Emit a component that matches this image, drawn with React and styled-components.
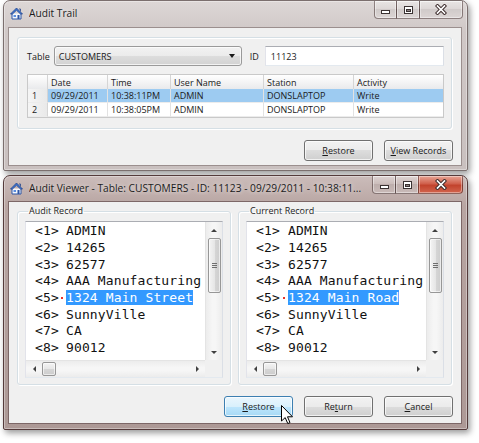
import React from "react";
import styled, { createGlobalStyle } from "styled-components";

const GlobalStyle = createGlobalStyle`
  html, body { margin: 0; padding: 0; background: #fff; }
  body {
    font-family: "Open Sans", "Noto Sans", sans-serif;
    font-size: 9px;
    color: #1a1a1a;
  }
  * { box-sizing: border-box; }
`;

const Page = styled.div`
  width: 479px;
  height: 443px;
  padding-left: 3px;
  display: flex;
  flex-direction: column;
  gap: 4px;
  overflow: hidden;
`;

const Window = styled.div`
  width: 465px;
  border: 1px solid ${(p) => (p.$active ? "#553b3b" : "#7b6f6e")};
  border-radius: 7px 7px 2px 2px;
  background: ${(p) =>
    p.$active
      ? "linear-gradient(#cbbcba, #b8a5a2 30px, #ad9996)"
      : "linear-gradient(#ddd7d6, #d0c8c7 30px, #c9c0bf)"};
  padding: 0 5px ${(p) => (p.$active ? 5 : 4)}px 4px;
  box-shadow: 2px 3px 6px rgba(0, 0, 0, 0.4),
    inset 0 0 0 1px rgba(255, 255, 255, 0.35);
`;

const TitleBar = styled.div`
  height: ${(p) => p.$h}px;
  display: flex;
  align-items: flex-start;
  padding-left: 2px;
`;

const AppIcon = styled.svg`
  flex: none;
  margin-top: ${(p) => p.$top}px;
`;

const Caption = styled.div`
  flex: 1;
  min-width: 0;
  margin: ${(p) => p.$top}px 6px 0 6px;
  font-size: 10.2px;
  line-height: 14px;
  color: #1c1c1c;
  white-space: nowrap;
  overflow: hidden;
  text-shadow: 0 0 5px rgba(255, 255, 255, 0.9);
`;

const CaptionButtons = styled.div`
  display: flex;
  flex: none;
  margin-right: -1px;
`;

const CapButton = styled.div`
  width: ${(p) => p.$w}px;
  height: 18px;
  display: flex;
  align-items: center;
  justify-content: center;
  border: 1px solid rgba(70, 50, 50, 0.55);
  border-top: none;
  margin-left: -1px;
  box-shadow: inset 0 0 0 1px rgba(255, 255, 255, 0.4);
  background: ${(p) =>
    p.$close
      ? "linear-gradient(#e8a595, #d0604c 45%, #c2432d 55%, #d2654e)"
      : "linear-gradient(rgba(255,255,255,.35), rgba(255,255,255,.08) 50%, rgba(0,0,0,.04) 50%, rgba(255,255,255,.15))"};
  &:first-child {
    border-bottom-left-radius: 4px;
  }
  &:last-child {
    border-bottom-right-radius: 4px;
  }
`;

const Client = styled.div`
  border: 1px solid ${(p) => (p.$active ? "#7d6767" : "#9b8f8e")};
  background: #f0f0f0;
  padding: ${(p) => p.$pad};
`;

const Panel = styled.div`
  margin: 0 9px 0 8px;
  border: 1px solid #d5dfe5;
  border-radius: 3px;
  box-shadow: inset 1px 1px 0 #fff, 1px 1px 0 #fff;
  padding: 8px 7px 10px 9px;
`;

const FieldRow = styled.div`
  display: flex;
  align-items: center;
  height: 20px;
`;

const Label = styled.span`
  margin: 0 ${(p) => p.$gap}px 0 ${(p) => p.$lead || 0}px;
`;

const Combo = styled.div`
  flex: 0 0 188px;
  height: 20px;
  border: 1px solid #9a9a9a;
  border-radius: 3px;
  background: linear-gradient(#f2f2f2, #ebebeb 50%, #dddddd 50%, #d2d2d2);
  box-shadow: inset 0 0 0 1px rgba(255, 255, 255, 0.7);
  display: flex;
  align-items: center;
  padding: 0 6px 0 4px;
  & > span {
    flex: 1;
  }
`;

const DownTriangle = styled.i`
  width: 0;
  height: 0;
  border-left: 3.5px solid transparent;
  border-right: 3.5px solid transparent;
  border-top: 4px solid #1a1a1a;
`;

const Input = styled.div`
  flex: 1;
  height: 20px;
  background: #fff;
  border: 1px solid;
  border-color: #abadb3 #dbdfe6 #e3e9ef #e2e3ea;
  display: flex;
  align-items: center;
  padding-left: 5px;
`;

const Grid = styled.div`
  margin-top: 8px;
  width: 417px;
  border: 1px solid #c9c9c9;
  background: #fff;
  display: grid;
  grid-template-columns: 20px 60px 63px 93px 90px 89px;
  grid-auto-rows: 14px;
  & > :nth-child(-n + 6) {
    height: 15px;
  }
`;

const Cell = styled.div`
  display: flex;
  align-items: center;
  padding-left: ${(p) => (p.$rowHead ? 4 : 3)}px;
  white-space: nowrap;
  overflow: hidden;
  border-right: 1px solid ${(p) => (p.$head || p.$rowHead ? "#d5d5d5" : "#e2e2e2")};
  border-bottom: 1px solid ${(p) => (p.$head ? "#d0d0d0" : "#ececec")};
  background: ${(p) =>
    p.$head
      ? "linear-gradient(#ffffff, #f4f4f5 50%, #e9eaec)"
      : p.$rowHead
      ? "linear-gradient(90deg, #f5f5f5, #e9e9e9)"
      : p.$selected
      ? "#9dcbf1"
      : "#fff"};
  &:nth-child(6n) {
    border-right: none;
  }
`;

const ButtonRow = styled.div`
  display: flex;
  justify-content: flex-end;
  gap: 11px;
  margin: 11px 8px 0 0;
`;

const Button = styled.button`
  width: 69px;
  height: 21px;
  padding: 0;
  font-family: "Open Sans", "Noto Sans", sans-serif;
  font-size: 9px;
  color: #1a1a1a;
  border: 1px solid ${(p) => (p.$hot ? "#3c7fb1" : "#707070")};
  border-radius: 3px;
  background: ${(p) =>
    p.$hot
      ? "linear-gradient(#eaf6fd, #d9f0fc 50%, #bee6fd 50%, #a7d9f5)"
      : "linear-gradient(#f2f2f2, #ebebeb 50%, #dddddd 50%, #cfcfcf)"};
  box-shadow: inset 0 0 0 1px rgba(255, 255, 255, 0.7);
  & u {
    text-underline-offset: 1px;
  }
`;

const HotWrap = styled.div`
  position: relative;
`;

const Cursor = styled.svg`
  position: absolute;
  left: 57px;
  top: 9px;
`;

const Groups = styled.div`
  display: grid;
  grid-template-columns: 1fr 1fr;
  gap: 7px;
  margin: 0 9px 0 8px;
`;

const Group = styled.fieldset`
  margin: 0;
  min-width: 0;
  border: 1px solid #d5dfe5;
  border-radius: 3px;
  box-shadow: inset 1px 1px 0 #fff, 1px 1px 0 #fff;
  padding: 4px 7px 6px 7px;
`;

const Legend = styled.legend`
  padding: 0 1px;
  margin-left: 3px;
  line-height: 12px;
  color: #1e1e1e;
`;

const TextBox = styled.div`
  height: 157px;
  background: #fff;
  border: 1px solid;
  border-color: #abadb3 #dbdfe6 #e3e9ef #e2e3ea;
  display: grid;
  grid-template-columns: 1fr 17px;
  grid-template-rows: 1fr 17px;
`;

const Lines = styled.div`
  overflow: hidden;
  padding-top: 0.5px;
  font-family: "DejaVu Sans Mono", "Liberation Mono", monospace;
  font-size: 13px;
  letter-spacing: 0.12px;
  color: #111;
`;

const Line = styled.div`
  display: flex;
  align-items: center;
  height: 16.7px;
  white-space: nowrap;
`;

const LineNo = styled.div`
  flex: none;
  width: ${(p) => p.$w}px;
  padding-left: 9px;
  display: flex;
  align-items: center;
`;

const Marker = styled.i`
  margin: 1px 3px 0 auto;
  width: 2px;
  height: 2px;
  background: #e8322a;
`;

const Selected = styled.span`
  background: #3399ff;
  color: #fff;
`;

const VScroll = styled.div`
  border-left: 1px solid #e4e4e4;
  background: linear-gradient(90deg, #ececec, #f6f6f6 40%, #f6f6f6 60%, #ececec);
  display: flex;
  flex-direction: column;
  align-items: center;
`;

const HScroll = styled.div`
  border-top: 1px solid #e4e4e4;
  background: linear-gradient(#ececec, #f6f6f6 40%, #f6f6f6 60%, #ececec);
  display: flex;
  align-items: center;
`;

const Corner = styled.div`
  background: #f0f0f0;
`;

const ArrowCell = styled.div`
  flex: none;
  width: 16px;
  height: 16px;
  display: flex;
  align-items: center;
  justify-content: center;
`;

const Arrow = styled.i`
  width: 0;
  height: 0;
  border: 3px solid transparent;
  ${(p) =>
    ({
      up: "border-bottom: 3px solid #404040; border-top-width: 0;",
      down: "border-top: 3px solid #404040; border-bottom-width: 0;",
      left: "border-right: 3px solid #404040; border-left-width: 0;",
      right: "border-left: 3px solid #404040; border-right-width: 0;",
    }[p.$dir])}
`;

const Thumb = styled.div`
  flex: none;
  width: ${(p) => p.$w}px;
  height: ${(p) => p.$h}px;
  border: 1px solid #979797;
  border-radius: 2px;
  background: ${(p) =>
    p.$horiz
      ? "linear-gradient(#f4f4f4, #e6e6e6 50%, #d6d6d6 51%, #cdcdcd)"
      : "linear-gradient(90deg, #f4f4f4, #e6e6e6 50%, #d6d6d6 51%, #cdcdcd)"};
  box-shadow: inset 0 0 0 1px rgba(255, 255, 255, 0.6);
  display: flex;
  flex-direction: column;
  align-items: center;
  justify-content: center;
  gap: 1px;
  & > b {
    width: 5px;
    height: 1px;
    background: #6e6e6e;
  }
`;

const Spacer = styled.div`
  flex: 1;
`;

const HouseIcon = ({ top }) => (
  <AppIcon $top={top} width="13" height="13" viewBox="0 0 13 13">
    <path d="M2 6.5 L2 12 L11 12 L11 6.5" fill="#f4f7fc" stroke="#2f56a5" strokeWidth="1" />
    <path d="M6.5 1 L0.5 7 L2.5 7 L6.5 3.2 L10.5 7 L12.5 7 Z" fill="#3f79d6" stroke="#23448c" strokeWidth="0.8" />
    <rect x="3.5" y="8" width="2.5" height="2" fill="#5a8ee0" />
    <rect x="7.5" y="8" width="2" height="4" fill="#2f56a5" />
    <path d="M9 2 L10.5 2 L10.5 4.5" fill="none" stroke="#23448c" strokeWidth="0.8" />
  </AppIcon>
);

const WindowButtons = ({ active }) => (
  <CaptionButtons>
    <CapButton $w={active ? 24 : 23}>
      <svg width="11" height="10" viewBox="0 0 11 10">
        <rect x="1.5" y="5.5" width="8" height="3" fill="#fff" stroke="#3a3232" />
      </svg>
    </CapButton>
    <CapButton $w={24}>
      <svg width="11" height="10" viewBox="0 0 11 10">
        <rect x="1.5" y="1.5" width="8" height="7" fill="#fff" stroke="#3a3232" />
        <rect x="3.5" y="4.5" width="4" height="2" fill="#8a8080" stroke="#3a3232" />
      </svg>
    </CapButton>
    <CapButton $w={active ? 45 : 44} $close={active}>
      <svg width="12" height="11" viewBox="0 0 12 11">
        <path d="M2.5 2 L9.5 9 M9.5 2 L2.5 9" stroke="#3a2a2a" strokeWidth="3.6" strokeLinecap="square" />
        <path d="M2.5 2 L9.5 9 M9.5 2 L2.5 9" stroke="#fff" strokeWidth="1.7" strokeLinecap="square" />
      </svg>
    </CapButton>
  </CaptionButtons>
);

const columns = ["", "Date", "Time", "User Name", "Station", "Activity"];
const rows = [
  { n: 1, date: "09/29/2011", time: "10:38:11PM", user: "ADMIN", station: "DONSLAPTOP", activity: "Write", selected: true },
  { n: 2, date: "09/29/2011", time: "10:38:05PM", user: "ADMIN", station: "DONSLAPTOP", activity: "Write" },
];

const baseRecord = ["ADMIN", "14265", "62577", "AAA Manufacturing", "1324 Main Street", "SunnyVille", "CA", "90012"];
const currentRecord = baseRecord.map((v, i) => (i === 4 ? "1324 Main Road" : v));

const RecordBox = ({ title, values, changed, gutter }) => (
  <Group>
    <Legend>{title}</Legend>
    <TextBox>
      <Lines>
        {values.map((v, i) => (
          <Line key={i}>
            <LineNo $w={gutter}>
              {`<${i + 1}>`}
              {i === changed && <Marker />}
            </LineNo>
            {i === changed ? <Selected>{v}</Selected> : <span>{v}</span>}
          </Line>
        ))}
      </Lines>
      <VScroll>
        <ArrowCell><Arrow $dir="up" /></ArrowCell>
        <Thumb $w={13} $h={55}>
          <b /><b /><b />
        </Thumb>
        <Spacer />
        <ArrowCell><Arrow $dir="down" /></ArrowCell>
      </VScroll>
      <HScroll>
        <ArrowCell><Arrow $dir="left" /></ArrowCell>
        <Thumb $w={14} $h={14} $horiz />
        <Spacer />
        <ArrowCell><Arrow $dir="right" /></ArrowCell>
      </HScroll>
      <Corner />
    </TextBox>
  </Group>
);

export default function App() {
  return (
    <>
      <GlobalStyle />
      <Page>
        <Window>
          <TitleBar $h={26}>
            <HouseIcon top={6} />
            <Caption $top={5}>Audit Trail</Caption>
            <WindowButtons />
          </TitleBar>
          <Client $pad="9px 0 4px 0">
            <Panel>
              <FieldRow>
                <Label $gap={4}>Table</Label>
                <Combo>
                  <span>CUSTOMERS</span>
                  <DownTriangle />
                </Combo>
                <Label $lead={8} $gap={6}>ID</Label>
                <Input>11123</Input>
              </FieldRow>
              <Grid>
                {columns.map((c, i) => (
                  <Cell key={i} $head>{c}</Cell>
                ))}
                {rows.map((r) => (
                  <React.Fragment key={r.n}>
                    <Cell $rowHead>{r.n}</Cell>
                    <Cell $selected={r.selected}>{r.date}</Cell>
                    <Cell $selected={r.selected}>{r.time}</Cell>
                    <Cell $selected={r.selected}>{r.user}</Cell>
                    <Cell $selected={r.selected}>{r.station}</Cell>
                    <Cell $selected={r.selected}>{r.activity}</Cell>
                  </React.Fragment>
                ))}
              </Grid>
            </Panel>
            <ButtonRow>
              <Button><u>R</u>estore</Button>
              <Button><u>V</u>iew Records</Button>
            </ButtonRow>
          </Client>
        </Window>

        <Window $active>
          <TitleBar $h={25}>
            <HouseIcon top={6} />
            <Caption $top={5}>
              Audit Viewer - Table: CUSTOMERS - ID: 11123 - 09/29/2011 - 10:38:11...
            </Caption>
            <WindowButtons active />
          </TitleBar>
          <Client $active $pad="3px 0 6px 0">
            <Groups>
              <RecordBox title="Audit Record" values={baseRecord} changed={4} gutter={40} />
              <RecordBox title="Current Record" values={currentRecord} changed={4} gutter={41} />
            </Groups>
            <ButtonRow>
              <HotWrap>
                <Button $hot><u>R</u>estore</Button>
                <Cursor width="13" height="20" viewBox="0 0 13 20">
                  <path
                    d="M0.5 0.5 L0.5 16 L4.2 12.6 L6.8 18.6 L9 17.6 L6.5 11.8 L11.5 11.8 Z"
                    fill="#fff"
                    stroke="#000"
                    strokeWidth="1"
                    strokeLinejoin="round"
                  />
                </Cursor>
              </HotWrap>
              <Button>Re<u>t</u>urn</Button>
              <Button><u>C</u>ancel</Button>
            </ButtonRow>
          </Client>
        </Window>
      </Page>
    </>
  );
}
